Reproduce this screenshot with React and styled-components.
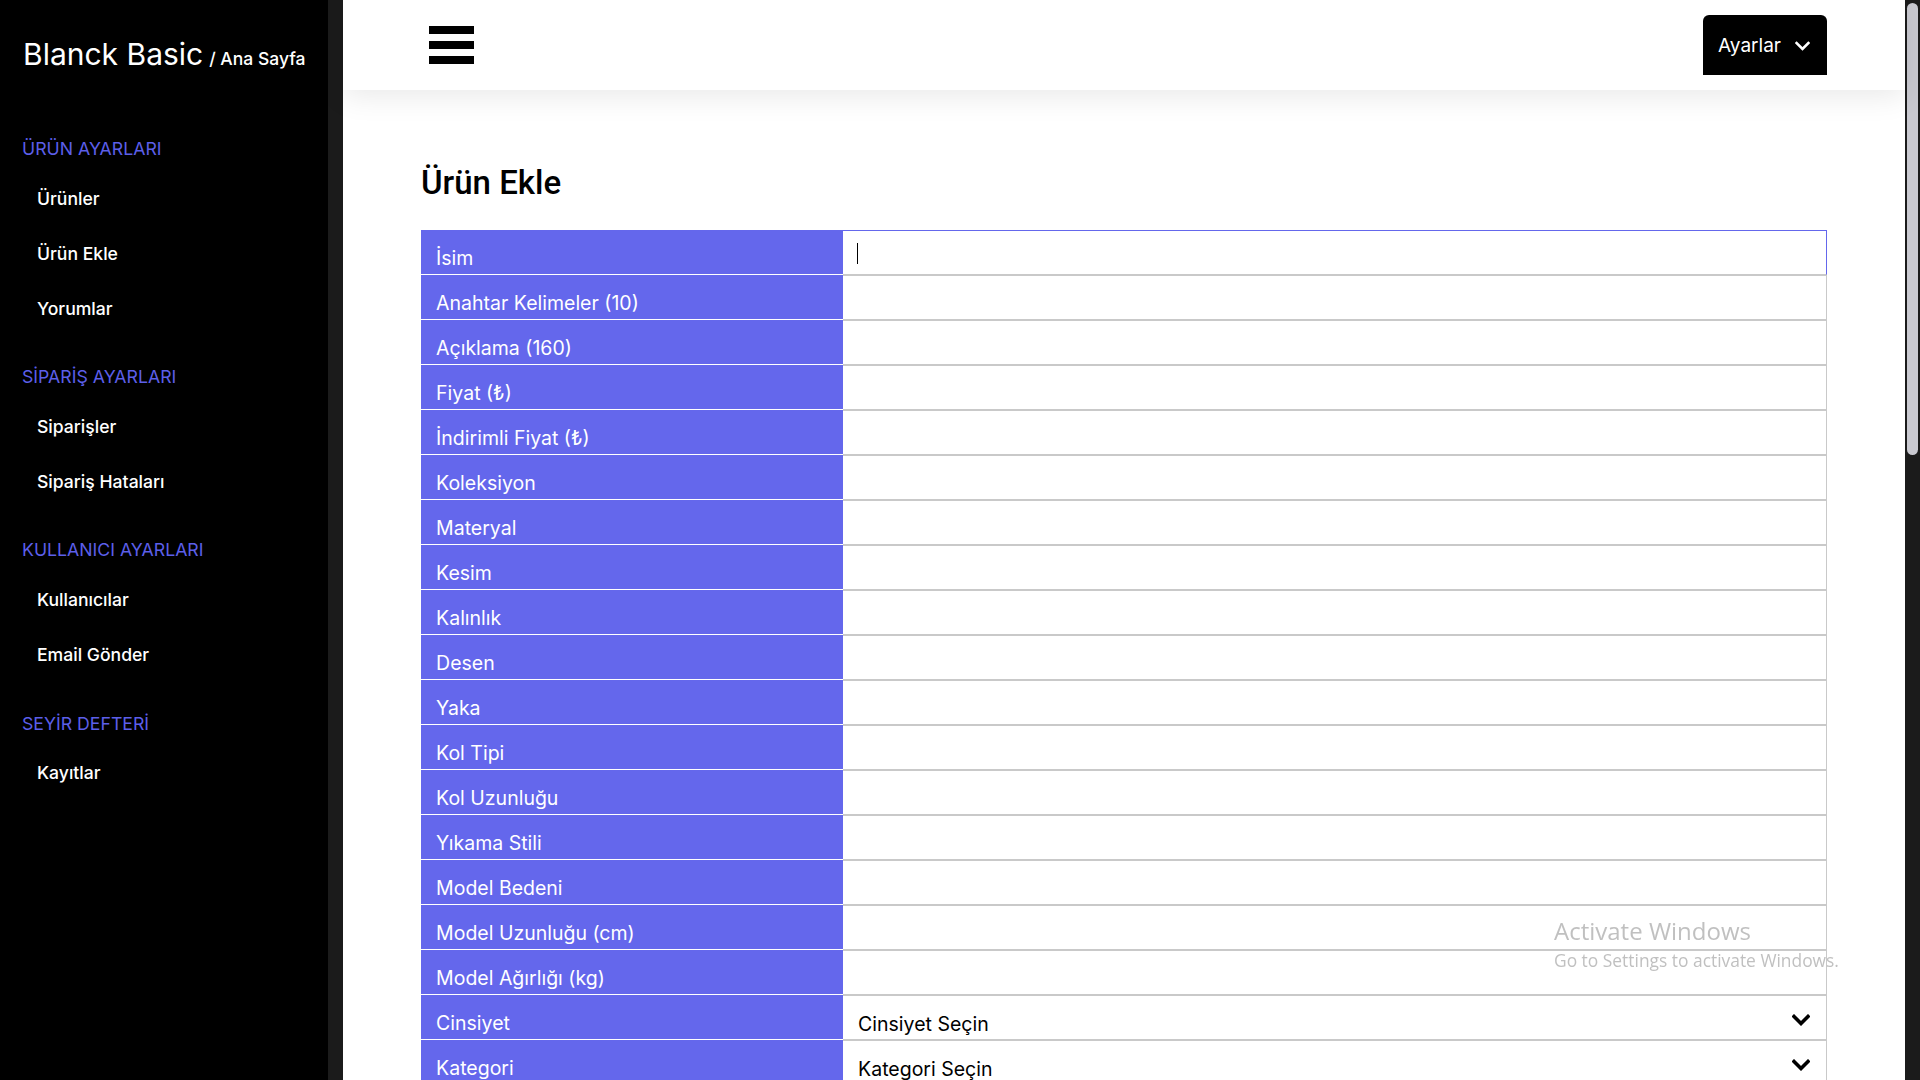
import React from "react";
import styled, { createGlobalStyle } from "styled-components";

const Global = createGlobalStyle`
  html, body { margin: 0; padding: 0; height: 100%; overflow: hidden; }
  body { font-family: Inter, "Noto Sans", sans-serif; background: #fff; }
  * { box-sizing: border-box; }
`;

const Shell = styled.div`
  display: flex;
  height: 100vh;
  width: 100vw;
  overflow: hidden;
`;

const Sidebar = styled.aside`
  width: 328px;
  flex: none;
  background: #000;
  color: #fff;
  display: flex;
  flex-direction: column;
`;

const Track = styled.div`
  width: 15px;
  flex: none;
  background: #1b1b1b;
`;

const Thumb = styled.div`
  margin: 3px 2px 0 2px;
  height: 452px;
  background: #c9c9d0;
  border-radius: 6px;
`;

const Brand = styled.div`
  padding: 36px 0 0 23px;
  line-height: 36px;
  white-space: nowrap;
`;

const BrandName = styled.span`
  font-size: 30px;
  font-weight: 400;
`;

const BrandSub = styled.span`
  font-size: 17.5px;
  font-weight: 500;
  margin-left: 6px;
`;

const Nav = styled.nav`
  display: flex;
  flex-direction: column;
  margin-top: 62px;
`;

const Group = styled.div`
  display: flex;
  flex-direction: column;
  margin-bottom: 31.7px;
`;

const GroupTitle = styled.div`
  color: #5c5fe9;
  font-size: 17.7px;
  line-height: 20px;
  padding-left: 22px;
  margin-bottom: 11.5px;
`;

const NavItem = styled.a`
  display: block;
  height: 55px;
  line-height: 55px;
  padding-left: 37px;
  font-size: 17.6px;
  font-weight: 500;
  color: #fff;
  text-decoration: none;
`;

const Main = styled.main`
  flex: 1;
  min-width: 0;
  display: flex;
  flex-direction: column;
  background: #fff;
`;

const TopBar = styled.header`
  height: 90px;
  flex: none;
  display: flex;
  align-items: center;
  justify-content: space-between;
  padding: 0 78px 0 86px;
  background: #fff;
  box-shadow: 0 6px 28px rgba(0, 0, 0, 0.09);
  position: relative;
  z-index: 1;
`;

const Burger = styled.button`
  width: 45px;
  height: 38px;
  padding: 0;
  border: 0;
  background: none;
  display: flex;
  flex-direction: column;
  justify-content: space-between;
`;

const BurgerBar = styled.span`
  display: block;
  height: 8px;
  background: #000;
`;

const SettingsButton = styled.button`
  width: 124px;
  height: 60px;
  background: #000;
  color: #fff;
  border: 0;
  border-radius: 6px 6px 0 0;
  font-family: Inter, sans-serif;
  font-size: 19px;
  display: flex;
  align-items: center;
  justify-content: center;
  gap: 14px;
  padding: 1px 2px 0 0;
`;

const Content = styled.section`
  flex: 1;
  padding-top: 73px;
  display: flex;
  flex-direction: column;
`;

const Title = styled.h2`
  margin: 0 0 27px 78px;
  font-family: Roboto, sans-serif;
  font-weight: 500;
  font-size: 33px;
  line-height: 40px;
  color: #000;
`;

const Form = styled.div`
  width: 90%;
  margin: 0 auto;
  display: flex;
  flex-direction: column;
`;

const Row = styled.div`
  display: grid;
  grid-template-columns: 422px 1fr;
  height: 45px;
`;

const Label = styled.label`
  background: #6467ec;
  color: #fff;
  border-bottom: 1px solid #fff;
  font-size: 19.5px;
  line-height: 23px;
  padding: 17px 0 0 15px;
  white-space: nowrap;
`;

const Field = styled.div`
  position: relative;
  border: 1px solid #c9c9c9;
  border-left: 0;
  border-top-color: ${(p) => (p.$focused ? "#6467ec" : "#c9c9c9")};
  border-right-color: ${(p) => (p.$focused ? "#6467ec" : "#c9c9c9")};
  display: flex;
  align-items: flex-start;
  justify-content: space-between;
  padding: 17px 16px 0 15px;
  font-size: 19.5px;
  line-height: 23px;
  color: #000;
`;

const Caret = styled.span`
  position: absolute;
  left: 14px;
  top: 12px;
  width: 1px;
  height: 21px;
  background: #000;
`;

const Chevron = styled.svg`
  flex: none;
  margin-top: ${(p) => p.$offset}px;
`;

const Watermark = styled.div`
  position: fixed;
  left: 1554px;
  top: 916px;
  color: rgba(185, 185, 185, 0.9);
  font-family: "Open Sans", "Noto Sans", sans-serif;
  pointer-events: none;
`;

const WmTitle = styled.div`
  font-size: 24px;
  line-height: 30px;
`;

const WmSub = styled.div`
  font-size: 17.4px;
  line-height: 22px;
  margin-top: 3px;
`;

const groups = [
  { title: "ÜRÜN AYARLARI", items: ["Ürünler", "Ürün Ekle", "Yorumlar"] },
  { title: "SİPARİŞ AYARLARI", items: ["Siparişler", "Sipariş Hataları"] },
  { title: "KULLANICI AYARLARI", items: ["Kullanıcılar", "Email Gönder"] },
  { title: "SEYİR DEFTERİ", items: ["Kayıtlar"] },
];

const fields = [
  "İsim",
  "Anahtar Kelimeler (10)",
  "Açıklama (160)",
  "Fiyat (₺)",
  "İndirimli Fiyat (₺)",
  "Koleksiyon",
  "Materyal",
  "Kesim",
  "Kalınlık",
  "Desen",
  "Yaka",
  "Kol Tipi",
  "Kol Uzunluğu",
  "Yıkama Stili",
  "Model Bedeni",
  "Model Uzunluğu (cm)",
  "Model Ağırlığı (kg)",
  { label: "Cinsiyet", select: "Cinsiyet Seçin" },
  { label: "Kategori", select: "Kategori Seçin" },
];

function Down({ color = "#000", w = 18, h = 12, sw = 3.6, offset = 0 }) {
  return (
    <Chevron viewBox="0 0 18 12" width={w} height={h} $offset={offset}>
      <polyline
        points="2,2.5 9,9.5 16,2.5"
        fill="none"
        stroke={color}
        strokeWidth={sw}
        strokeLinecap="square"
      />
    </Chevron>
  );
}

export default function App() {
  return (
    <>
      <Global />
      <Shell>
        <Sidebar>
          <Brand>
            <BrandName>Blanck Basic</BrandName>
            <BrandSub>/ Ana Sayfa</BrandSub>
          </Brand>
          <Nav>
            {groups.map((g) => (
              <Group key={g.title}>
                <GroupTitle>{g.title}</GroupTitle>
                {g.items.map((it) => (
                  <NavItem key={it} href="#">
                    {it}
                  </NavItem>
                ))}
              </Group>
            ))}
          </Nav>
        </Sidebar>
        <Track />
        <Main>
          <TopBar>
            <Burger aria-label="menu">
              <BurgerBar />
              <BurgerBar />
              <BurgerBar />
            </Burger>
            <SettingsButton>
              Ayarlar
              <Down color="#fff" w={15} h={10} sw={3.2} />
            </SettingsButton>
          </TopBar>
          <Content>
            <Title>Ürün Ekle</Title>
            <Form>
              {fields.map((f, i) => {
                const label = typeof f === "string" ? f : f.label;
                const sel = typeof f === "string" ? null : f.select;
                return (
                  <Row key={label}>
                    <Label>{label}</Label>
                    <Field $focused={i === 0}>
                      {i === 0 && <Caret />}
                      {sel && (
                        <>
                          <span>{sel}</span>
                          <Down offset={1} />
                        </>
                      )}
                    </Field>
                  </Row>
                );
              })}
            </Form>
          </Content>
        </Main>
        <Track>
          <Thumb />
        </Track>
      </Shell>
      <Watermark>
        <WmTitle>Activate Windows</WmTitle>
        <WmSub>Go to Settings to activate Windows.</WmSub>
      </Watermark>
    </>
  );
}
